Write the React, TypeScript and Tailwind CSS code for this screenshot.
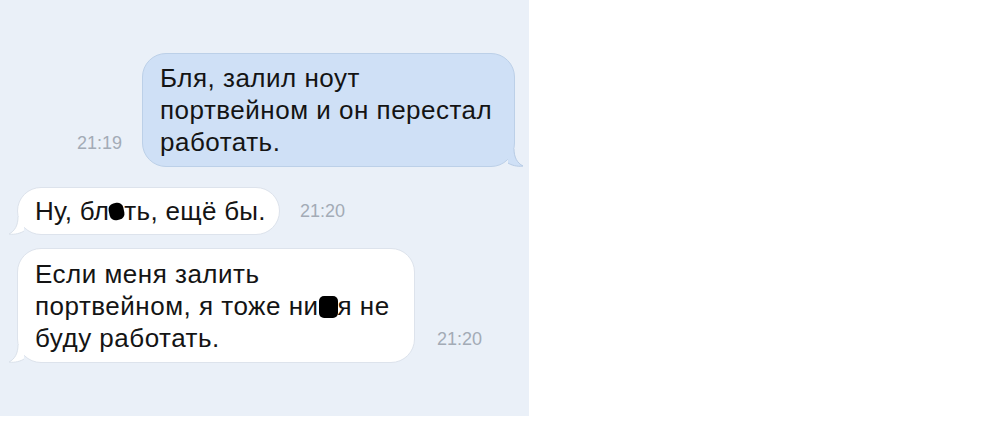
import React from 'react';

const Censor = ({ className }: { className: string }) => (
  <span className={`inline-block bg-black align-middle ${className}`} />
);

function OutTail() {
  return (
    <svg className="absolute -right-[10px] bottom-[-1px]" width="16" height="18" viewBox="0 0 16 18">
      <path d="M0 0 L6 0 C6 8 9 14 15 17 C9 18 3 16 0 14 Z" fill="#cfe0f6" />
      <path d="M6 0 C6 8 9 14 15 17 C9 18 3 16 0 14" fill="none" stroke="#b7cbe4" strokeWidth="1" />
    </svg>
  );
}

function InTail() {
  return (
    <svg className="absolute -left-[10px] bottom-[-1px]" width="16" height="18" viewBox="0 0 16 18">
      <path d="M16 0 L10 0 C10 8 7 14 1 17 C7 18 13 16 16 14 Z" fill="#ffffff" />
      <path d="M10 0 C10 8 7 14 1 17 C7 18 13 16 16 14" fill="none" stroke="#dae1ea" strokeWidth="1" />
    </svg>
  );
}

function App() {
  return (
    <div className="min-h-screen bg-white" style={{ fontFamily: '"Liberation Sans", Arial, sans-serif' }}>
      <div className="w-[529px] h-[416px] bg-[#eaf0f8] flex flex-col pt-[53px]">
        {/* outgoing */}
        <div className="flex justify-end items-end pr-[14px]">
          <span className="text-[18px] text-[#a3abb6] mr-[20px] mb-[10px]">21:19</span>
          <div className="relative w-[373px] rounded-[24px] bg-[#cfe0f6] border border-[#bcd0e8] pl-[17px] pt-[8px] pb-[8px] text-[26px] leading-[32px] tracking-[0.5px] text-[#141414] whitespace-nowrap">
            Бля, залил ноут<br />портвейном и он перестал<br />работать.
            <OutTail />
          </div>
        </div>

        {/* incoming 1 */}
        <div className="flex items-center pl-[17px] mt-[20px]">
          <div className="relative w-[263px] rounded-[24px] bg-white border border-[#dde3ec] pl-[17px] pt-[7px] pb-[7px] text-[26px] leading-[32px] tracking-[0.3px] text-[#141414] whitespace-nowrap">
            Ну, бл<Censor className="w-[15px] h-[17px] rounded-[6px] -mt-[4px] -rotate-12" />ть, ещё бы.
            <InTail />
          </div>
          <span className="text-[18px] text-[#a3abb6] ml-[20px]">21:20</span>
        </div>

        {/* incoming 2 */}
        <div className="flex items-end pl-[17px] mt-[13px]">
          <div className="relative w-[398px] rounded-[24px] bg-white border border-[#dde3ec] pl-[17px] pt-[9px] pb-[8px] text-[26px] leading-[32px] tracking-[0.5px] text-[#141414] whitespace-nowrap">
            Если меня залить<br />портвейном, я тоже ни<Censor className="w-[19px] h-[22px] rounded-[5px] -mt-[2px]" />я не<br />буду работать.
            <InTail />
          </div>
          <span className="text-[18px] text-[#a3abb6] ml-[22px] mb-[10px]">21:20</span>
        </div>
      </div>
    </div>
  );
}

export default App;
